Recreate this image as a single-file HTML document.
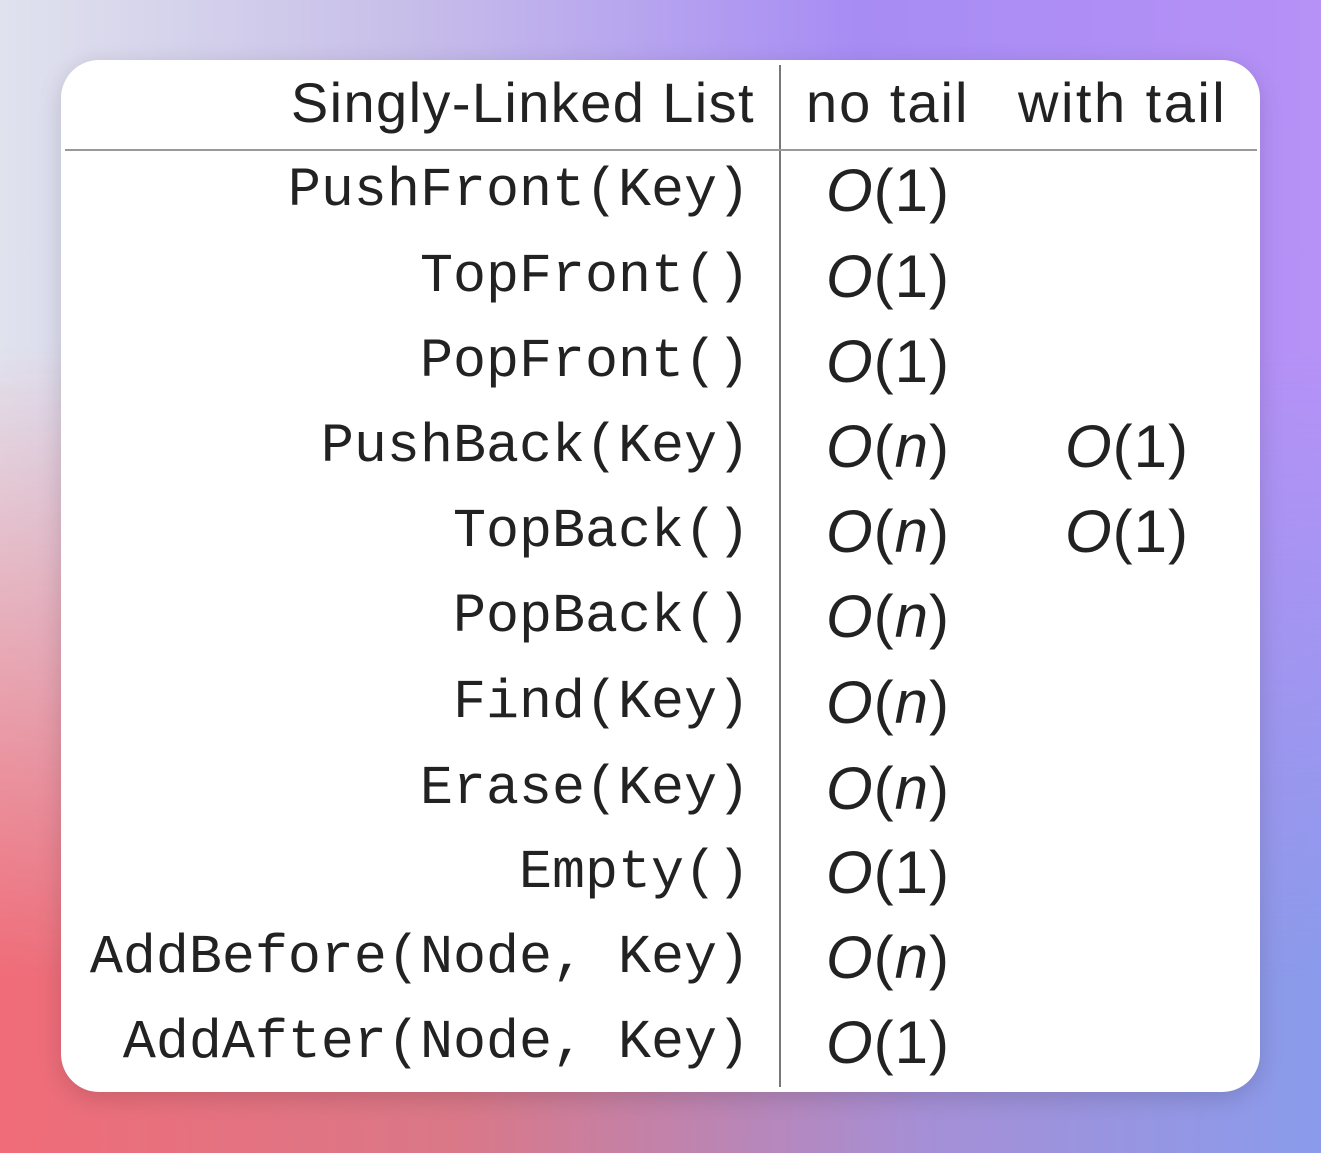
<!DOCTYPE html>
<html><head><style>
html,body{margin:0;padding:0;}
body{width:1321px;height:1153px;position:relative;overflow:hidden;
background:linear-gradient(90deg,#f06c78 0%,#d97888 35%,#a58fd6 70%,#8a9bec 100%);}
.top{position:absolute;left:0;top:0;width:1321px;height:1153px;
background:linear-gradient(90deg,#e0e2ee 0%,#c8bfe9 30%,#a78cf4 65%,#b691f6 100%);
-webkit-mask-image:linear-gradient(180deg,#000 0%,#000 30%,transparent 85%);
mask-image:linear-gradient(180deg,#000 0%,#000 30%,transparent 85%);}
.card{position:absolute;left:61px;top:60px;width:1199px;height:1032px;background:#fff;border-radius:38px;box-shadow:0 6px 24px rgba(0,0,0,.15);}
.vl{position:absolute;left:779px;top:65px;width:2px;height:1022px;background:#777;}
.hl{position:absolute;left:65px;top:149px;width:1192px;height:2px;background:#999;}
.t{position:absolute;white-space:pre;color:#222;}
.h{font-family:"Liberation Sans",sans-serif;font-size:56px;top:70px;line-height:66px;letter-spacing:2.5px;}
.f{font-family:"Liberation Mono",monospace;font-size:55px;right:571px;line-height:85px;}
.o{font-family:"Liberation Sans",sans-serif;font-size:60px;line-height:85px;letter-spacing:1px;}
.o i{font-style:italic;}
</style></head><body>
<div class="top"></div>
<div class="card"></div>
<div class="vl"></div><div class="hl"></div>
<div class="t h" style="right:566px;letter-spacing:1.4px">Singly-Linked List</div>
<div class="t h" style="left:806px;letter-spacing:2px">no tail</div>
<div class="t h" style="left:1018px">with tail</div>

<div class="t f" style="top:148px">PushFront(Key)</div>
<div class="t f" style="top:234px">TopFront()</div>
<div class="t f" style="top:319px">PopFront()</div>
<div class="t f" style="top:404px">PushBack(Key)</div>
<div class="t f" style="top:489px">TopBack()</div>
<div class="t f" style="top:574px">PopBack()</div>
<div class="t f" style="top:660px">Find(Key)</div>
<div class="t f" style="top:746px">Erase(Key)</div>
<div class="t f" style="top:830px">Empty()</div>
<div class="t f" style="top:915px">AddBefore(Node, Key)</div>
<div class="t f" style="top:1000px">AddAfter(Node, Key)</div>

<div class="t o" style="left:826px;top:148px"><i>O</i>(1)</div>
<div class="t o" style="left:826px;top:234px"><i>O</i>(1)</div>
<div class="t o" style="left:826px;top:319px"><i>O</i>(1)</div>
<div class="t o" style="left:826px;top:404px"><i>O</i>(<i>n</i>)</div>
<div class="t o" style="left:1065px;top:404px"><i>O</i>(1)</div>
<div class="t o" style="left:826px;top:489px"><i>O</i>(<i>n</i>)</div>
<div class="t o" style="left:1065px;top:489px"><i>O</i>(1)</div>
<div class="t o" style="left:826px;top:574px"><i>O</i>(<i>n</i>)</div>
<div class="t o" style="left:826px;top:660px"><i>O</i>(<i>n</i>)</div>
<div class="t o" style="left:826px;top:746px"><i>O</i>(<i>n</i>)</div>
<div class="t o" style="left:826px;top:830px"><i>O</i>(1)</div>
<div class="t o" style="left:826px;top:915px"><i>O</i>(<i>n</i>)</div>
<div class="t o" style="left:826px;top:1000px"><i>O</i>(1)</div>
</body></html>
